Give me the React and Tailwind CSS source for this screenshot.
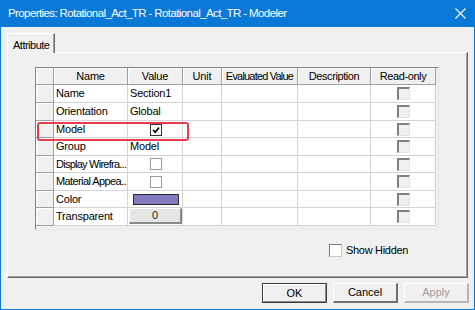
import React from "react";

const font = "font-['Liberation_Sans',Arial,sans-serif]";

function Check({ checked }) {
  return (
    <div
      className={
        "w-[12px] h-[12px] bg-white border " +
        (checked ? "border-[#333333]" : "border-[#9a9a9a]") +
        " flex items-center justify-center"
      }
    >
      {checked && (
        <svg width="10" height="10" viewBox="0 0 10 10">
          <path d="M2 5 L4.2 7.2 L8 2.6" fill="none" stroke="#000" strokeWidth="1.7" />
        </svg>
      )}
    </div>
  );
}

function ROBox() {
  return (
    <div className="w-[13px] h-[13px] border-t-2 border-l-2 border-t-[#808080] border-l-[#808080] border-b border-r border-b-[#e3e3e3] border-r-[#e3e3e3] bg-[#f0f0f0]" />
  );
}

const rows = [
  { name: "Name", h: "h-[18px]", v: "text", t: "Section1", tr: "tracking-[-0.2px]" },
  { name: "Orientation", h: "h-[18px]", v: "text", t: "Global", tr: "tracking-[-0.2px]" },
  { name: "Model", h: "h-[17px]", v: "checked", tr: "tracking-[-0.2px]" },
  { name: "Group", h: "h-[18px]", v: "text", t: "Model", tr: "tracking-[-0.2px]" },
  { name: "Display Wirefra...", h: "h-[17px]", v: "box", tr: "tracking-[-0.75px]" },
  { name: "Material Appea...", h: "h-[18px]", v: "box", tr: "tracking-[-0.6px]" },
  { name: "Color", h: "h-[17px]", v: "color", tr: "tracking-[-0.2px]" },
  { name: "Transparent", h: "h-[18px]", v: "button", tr: "tracking-[-0.2px]" },
];

const headers = [
  { t: "Name", w: "w-[74px]", tr: "tracking-[-0.2px]" },
  { t: "Value", w: "w-[55px]", tr: "tracking-[-0.2px]" },
  { t: "Unit", w: "w-[39px]", tr: "tracking-[-0.2px]" },
  { t: "Evaluated Value", w: "w-[76px]", tr: "tracking-[-0.8px]" },
  { t: "Description", w: "w-[73px]", tr: "tracking-[-0.4px]" },
  { t: "Read-only", w: "w-[65px]", tr: "tracking-[-0.4px]" },
];

function ValueCell({ r }) {
  if (r.v === "text") return <span className="pl-[1px]">{r.t}</span>;
  if (r.v === "checked")
    return (
      <div className="flex-1 flex justify-center pt-[2px]">
        <Check checked />
      </div>
    );
  if (r.v === "box")
    return (
      <div className="flex-1 flex justify-center">
        <Check />
      </div>
    );
  if (r.v === "color")
    return (
      <div className="flex-1 flex justify-center">
        <div className="w-[46px] h-[11px] border border-[#2a2a2a] bg-[#8179c2]" />
      </div>
    );
  return (
    <div className="flex-1 flex justify-center items-end h-full pb-[1px]">
      <div className="w-[53px] h-[16px] bg-[#e6e6e6] border-t border-l border-t-white border-l-white border-b-2 border-r-2 border-b-[#8a8a8a] border-r-[#8a8a8a] flex items-center justify-center text-[#1a1a1a]">
        0
      </div>
    </div>
  );
}

export default function App() {
  return (
    <div className={"w-[475px] h-[310px] bg-[#0a78d7] flex flex-col text-[11px] text-black " + font}>
      <div className="h-[27px] flex items-center pl-[8px] pr-[9px] text-white">
        <span className="flex-1 text-[11.5px] tracking-[-0.6px] pt-[1px] whitespace-nowrap">
          Properties: Rotational_Act_TR - Rotational_Act_TR - Modeler
        </span>
        <svg width="11" height="11" viewBox="0 0 11 11">
          <path d="M0.5 0.5 L10.5 10.5 M10.5 0.5 L0.5 10.5" stroke="#fff" strokeWidth="1.1" />
        </svg>
      </div>
      <div className="flex-1 mx-[1px] mb-[1px] bg-[#f0f0f0] flex flex-col pl-[6px] pt-[6px]">
        <div className="relative z-10 -mb-[1px] w-[48px] h-[20px] bg-[#f0f0f0] border-t border-l border-t-white border-l-white border-r border-r-[#696969] shadow-[inset_-1px_0_0_#a0a0a0] pl-[5px] pt-[3px] tracking-[-0.5px] whitespace-nowrap">
          Attribute
        </div>
        <div className="w-[461px] h-[226px] border-t border-l border-t-white border-l-white border-b border-r border-b-[#696969] border-r-[#696969] shadow-[inset_-1px_-1px_0_#a0a0a0]">
          <div className="relative ml-[27px] mt-[14px] w-[404px] h-[163px] border border-t-[#828282] border-l-[#828282] border-b-[#e8e8e8] border-r-[#e8e8e8] bg-[#f0f0f0]">
            <div className="flex h-[17px]">
              <div className="w-[18px] h-full bg-[#f0f0f0] border-r border-b border-[#a0a0a0] shadow-[inset_1px_1px_0_#fff]" />
              {headers.map((h) => (
                <div
                  key={h.t}
                  className={
                    h.w +
                    " " +
                    h.tr +
                    " h-full bg-[#f0f0f0] border-r border-b border-[#a0a0a0] shadow-[inset_1px_1px_0_#fff] flex items-center justify-center whitespace-nowrap overflow-hidden"
                  }
                >
                  {h.t}
                </div>
              ))}
            </div>
            {rows.map((r) => (
              <div key={r.name} className={"flex " + r.h}>
                <div className="w-[18px] h-full bg-[#f0f0f0] border-r border-b border-[#a0a0a0] shadow-[inset_1px_1px_0_#fff]" />
                <div
                  className={
                    "w-[74px] h-full bg-white border-r border-b border-[#d4d4d4] flex items-center pl-[2px] whitespace-nowrap overflow-hidden " +
                    r.tr
                  }
                >
                  {r.name}
                </div>
                <div className="w-[55px] h-full bg-white border-r border-b border-[#d4d4d4] flex items-center pl-[1px] whitespace-nowrap overflow-hidden tracking-[-0.2px]">
                  <ValueCell r={r} />
                </div>
                <div className="w-[39px] h-full bg-white border-r border-b border-[#d4d4d4]" />
                <div className="w-[76px] h-full bg-white border-r border-b border-[#d4d4d4]" />
                <div className="w-[73px] h-full bg-white border-r border-b border-[#d4d4d4]" />
                <div className="w-[65px] h-full bg-white border-r border-b border-[#d4d4d4] flex items-center justify-center">
                  <ROBox />
                </div>
              </div>
            ))}
            <div className="absolute left-[1px] top-[54px] w-[152px] h-[19px] border-2 border-[#e63e50] rounded-[3px]" />
          </div>
          <div className="flex items-center ml-[321px] mt-[12px] gap-[4px]">
            <div className="w-[13px] h-[13px] bg-white border border-t-[#7a7a7a] border-l-[#7a7a7a] border-b-[#c8c8c8] border-r-[#c8c8c8]" />
            <span className="tracking-[-0.3px]">Show Hidden</span>
          </div>
        </div>
        <div className="flex justify-end gap-[6px] pr-[5px] mt-[5px]">
          <div className="w-[65px] h-[20px] border border-[#3c3c3c] flex">
            <div className="flex-1 border-t border-l border-t-white border-l-white border-b border-r border-b-[#8a8a8a] border-r-[#8a8a8a] flex items-center justify-center">
              OK
            </div>
          </div>
          <div className="w-[65px] h-[20px] bg-[#f0f0f0] border-t border-l border-t-white border-l-white border-b-2 border-r-2 border-b-[#6f6f6f] border-r-[#6f6f6f] flex items-center justify-center">
            Cancel
          </div>
          <div className="w-[65px] h-[20px] bg-[#f0f0f0] border-t border-l border-t-white border-l-white border-b-2 border-r-2 border-b-[#b5b5b5] border-r-[#b5b5b5] flex items-center justify-center text-[#a0a0a0]">
            Apply
          </div>
        </div>
      </div>
    </div>
  );
}
